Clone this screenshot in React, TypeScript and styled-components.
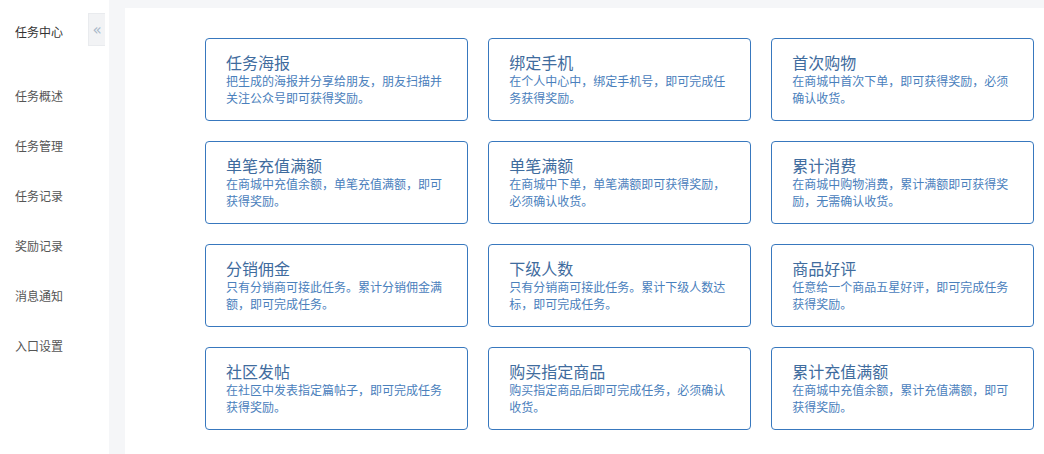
import React from "react";
import styled, { createGlobalStyle } from "styled-components";

const tasks = [
  { title: "任务海报", desc: "把生成的海报并分享给朋友，朋友扫描并关注公众号即可获得奖励。" },
  { title: "绑定手机", desc: "在个人中心中，绑定手机号，即可完成任务获得奖励。" },
  { title: "首次购物", desc: "在商城中首次下单，即可获得奖励，必须确认收货。" },
  { title: "单笔充值满额", desc: "在商城中充值余额，单笔充值满额，即可获得奖励。" },
  { title: "单笔满额", desc: "在商城中下单，单笔满额即可获得奖励，必须确认收货。" },
  { title: "累计消费", desc: "在商城中购物消费，累计满额即可获得奖励，无需确认收货。" },
  { title: "分销佣金", desc: "只有分销商可接此任务。累计分销佣金满额，即可完成任务。" },
  { title: "下级人数", desc: "只有分销商可接此任务。累计下级人数达标，即可完成任务。" },
  { title: "商品好评", desc: "任意给一个商品五星好评，即可完成任务获得奖励。" },
  { title: "社区发帖", desc: "在社区中发表指定篇帖子，即可完成任务获得奖励。" },
  { title: "购买指定商品", desc: "购买指定商品后即可完成任务，必须确认收货。" },
  { title: "累计充值满额", desc: "在商城中充值余额，累计充值满额，即可获得奖励。" },
];

const menu = ["任务概述", "任务管理", "任务记录", "奖励记录", "消息通知", "入口设置"];

// ==================== Main Component ====================
export default function App() {
  return (
    <>
      <GlobalStyle />
      <Layout>
        <Sidebar>
          <SideTitle>任务中心</SideTitle>
          <MenuList>
            {menu.map((m) => (
              <MenuItem key={m}>{m}</MenuItem>
            ))}
          </MenuList>
          <CollapseTab>«</CollapseTab>
        </Sidebar>
        <Main>
          <Panel>
            <CardGrid>
              {tasks.map((t) => (
                <Card key={t.title}>
                  <CardTitle>{t.title}</CardTitle>
                  <CardDesc>{t.desc}</CardDesc>
                </Card>
              ))}
            </CardGrid>
          </Panel>
        </Main>
      </Layout>
    </>
  );
}

// ==================== Styled Components ====================

const GlobalStyle = createGlobalStyle`
  html, body {
    margin: 0;
    padding: 0;
    background: #fff;
    font-family: "Noto Sans CJK SC", "Noto Sans", sans-serif;
  }
  * {
    box-sizing: border-box;
  }
`;

const Layout = styled.div`
  display: flex;
  width: 1044px;
  height: 454px;
  overflow: hidden;
`;

const Sidebar = styled.div`
  position: relative;
  width: 109px;
  flex-shrink: 0;
  background: #fff;
  padding: 23px 0 0 15px;
`;

const SideTitle = styled.div`
  font-size: 12px;
  line-height: 18px;
  color: #333;
`;

const MenuList = styled.div`
  display: flex;
  flex-direction: column;
  gap: 32px;
  margin-top: 46px;
`;

const MenuItem = styled.div`
  font-size: 12px;
  line-height: 18px;
  color: #555;
`;

const CollapseTab = styled.div`
  position: absolute;
  top: 13px;
  left: 88px;
  width: 17px;
  height: 33px;
  background: #f2f3f5;
  border: 1px solid #e9ebee;
  border-right: none;
  display: flex;
  align-items: center;
  justify-content: center;
  color: #a7b6c8;
  font-size: 15px;
  font-family: "DejaVu Sans", sans-serif;
`;

const Main = styled.div`
  flex: 1;
  background: #f5f6f8;
  padding: 8px 0 0 16px;
  display: flex;
`;

const Panel = styled.div`
  flex: 1;
  background: #fff;
  padding: 30px 10px 0 80px;
`;

const CardGrid = styled.div`
  display: grid;
  grid-template-columns: repeat(3, 1fr);
  column-gap: 20.5px;
  row-gap: 20px;
`;

const Card = styled.div`
  height: 83px;
  border: 1px solid #3878be;
  border-radius: 4px;
  padding: 13px 20px 0 20px;
`;

const CardTitle = styled.div`
  font-size: 16px;
  line-height: 20px;
  color: #3f6c9e;
`;

const CardDesc = styled.div`
  font-size: 12px;
  line-height: 17px;
  color: #4a80bc;
`;
